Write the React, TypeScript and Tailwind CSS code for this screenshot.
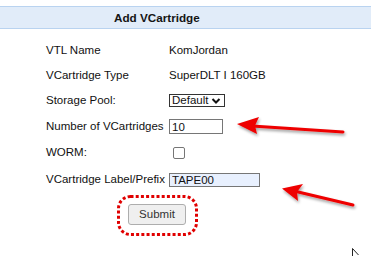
import React from "react";

const font = { fontFamily: '"Liberation Sans", Arial, sans-serif' };

function Row({ h, label, children }: { h: string; label: string; children: React.ReactNode }) {
  return (
    <div className={`flex items-center ${h}`}>
      <div className="w-[123px] shrink-0 whitespace-nowrap">{label}</div>
      <div className="flex items-center">{children}</div>
    </div>
  );
}

export default function App() {
  return (
    <div className="relative w-[371px] h-[258px] bg-white overflow-hidden text-[11.5px] text-[#111]" style={font}>
      <div className="mt-[6px] h-[23px] border-y border-[#b9d3f0] bg-[#e1ecf9] flex items-center pl-[114px] font-bold text-[11.7px] text-[#151515]">
        Add VCartridge
      </div>
      <div className="pl-[46px] mt-[9px] flex flex-col">
        <Row h="h-[26px]" label="VTL Name">
          <span>KomJordan</span>
        </Row>
        <Row h="h-[24px]" label="VCartridge Type">
          <span>SuperDLT I 160GB</span>
        </Row>
        <Row h="h-[25px]" label="Storage Pool:">
          <div className="h-[13px] w-[56px] border border-[#333] flex items-center pl-[2px] leading-none">
            <span>Default</span>
            <svg width="10" height="8" viewBox="0 0 10 8" className="ml-[3px]">
              <path d="M1.5 2 L5 5.5 L8.5 2" fill="none" stroke="#111" strokeWidth="2" />
            </svg>
          </div>
        </Row>
        <Row h="h-[27px]" label="Number of VCartridges">
          <input
            readOnly
            value="10"
            className="h-[15px] w-[54px] border border-[#767676] px-[2px] text-[11.5px] outline-none leading-none text-[#111]"
            style={font}
          />
        </Row>
        <Row h="h-[26px]" label="WORM:">
          <div className="ml-[4px] h-[12px] w-[12px] rounded-[2px] border border-[#767676] bg-white" />
        </Row>
        <Row h="h-[27px]" label="VCartridge Label/Prefix">
          <input
            readOnly
            value="TAPE00"
            className="h-[14px] w-[91px] border border-[#767676] bg-[#e8f0fe] px-[2px] text-[11.5px] outline-none leading-none text-[#111]"
            style={font}
          />
        </Row>
      </div>
      <div className="mt-[11px] pl-[128px]">
        <button
          className="h-[21px] w-[58px] rounded-[3px] border border-[#adadad] bg-[#efefef] text-[11.5px] text-[#333] leading-none"
          style={font}
        >
          Submit
        </button>
      </div>

      {/* annotations */}
      <svg className="absolute left-0 top-0 pointer-events-none" width="371" height="258" viewBox="0 0 371 258">
        <defs>
          <filter id="sh" x="-20%" y="-50%" width="140%" height="200%">
            <feGaussianBlur in="SourceAlpha" stdDeviation="1.5" />
            <feOffset dx="1" dy="2" result="b" />
            <feComponentTransfer>
              <feFuncA type="linear" slope="0.4" />
            </feComponentTransfer>
            <feMerge>
              <feMergeNode />
              <feMergeNode in="SourceGraphic" />
            </feMerge>
          </filter>
        </defs>
        <rect
          x="118.5"
          y="196.5"
          width="78"
          height="38"
          rx="12"
          fill="none"
          stroke="#e00000"
          strokeWidth="3"
          strokeDasharray="3 2.2"
        />
        <g filter="url(#sh)">
          <line x1="343" y1="132" x2="252" y2="126" stroke="#ee0000" strokeWidth="3" strokeLinecap="round" />
          <path d="M237 124 L259 117 L255 125.5 L257 134 Z" fill="#ee0000" />
          <line x1="353" y1="205" x2="294" y2="191" stroke="#ee0000" strokeWidth="3" strokeLinecap="round" />
          <path d="M282 188.5 L303 184 L297 192 L298 201 Z" fill="#ee0000" />
        </g>
        <path d="M352.5 248.5 L352.5 256 M352.5 248.5 L358.5 255" stroke="#222" strokeWidth="1" fill="none" />
      </svg>
    </div>
  );
}
